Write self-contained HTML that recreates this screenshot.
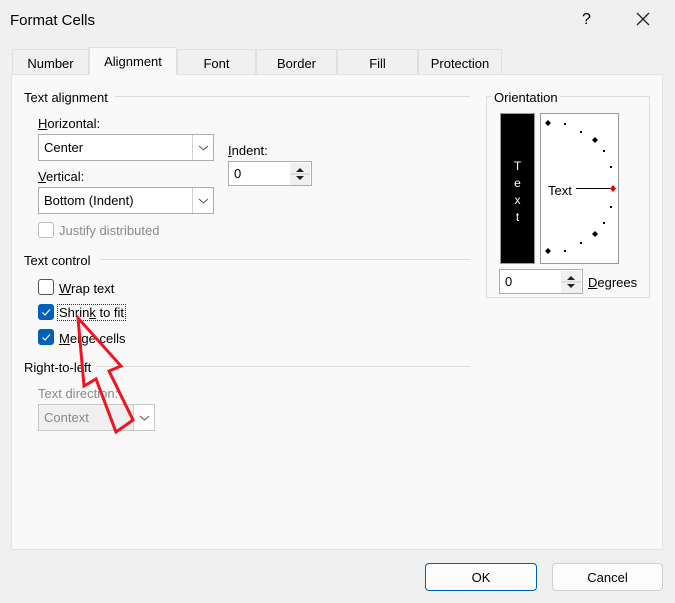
<!DOCTYPE html><html><head><style>
*{margin:0;padding:0;box-sizing:border-box}
body{width:675px;height:603px;background:#f0f0f0;font-family:"Liberation Sans",sans-serif;font-size:13px;color:#000;position:relative;overflow:hidden}
.a{position:absolute;white-space:nowrap}
.tab{position:absolute;top:49px;height:25px;border:1px solid #e0e0e0;border-bottom:none;background:#f0f0f0;text-align:center;line-height:27px}
.sel{top:47px;height:28px;background:#f9f9f9;z-index:2}
.panel{position:absolute;left:11px;top:74px;width:652px;height:476px;background:#f9f9f9;border:1px solid #e3e3e3}
.line{position:absolute;height:1px;background:#dcdcdc}
.combo{position:absolute;background:#fff;border:1px solid #adadad;height:27px;line-height:26px;padding-left:5px}
.combo .dd{position:absolute;right:0;top:0;width:21px;height:25px;border-left:1px solid #d0d0d0}
.cb{position:absolute;width:16px;height:16px;border:1px solid #555;border-radius:3px;background:#fff}
.cbk{background:#005fb8;border-color:#005fb8}
.spin{position:absolute;background:#fff;border:1px solid #adadad;height:25px;line-height:24px;padding-left:5px}
.btn{position:absolute;height:28px;border:1px solid #d0d0d0;border-radius:4px;background:#fdfdfd;text-align:center;line-height:28px}
u{text-decoration:underline}
</style></head><body>
<div class="a" style="left:10px;top:12px;font-size:15px">Format Cells</div>
<div class="a" style="left:582px;top:11px;font-size:16px">?</div>
<svg class="a" style="left:636px;top:12px" width="14" height="14"><path d="M1 1L13 13M13 1L1 13" stroke="#222" stroke-width="1.3"/></svg>
<div class="panel"></div>
<div class="tab" style="left:12px;width:77px">Number</div>
<div class="tab sel" style="left:89px;width:88px">Alignment</div>
<div class="tab" style="left:177px;width:79px">Font</div>
<div class="tab" style="left:256px;width:81px">Border</div>
<div class="tab" style="left:337px;width:81px">Fill</div>
<div class="tab" style="left:418px;width:84px">Protection</div>

<div class="a" style="left:24px;top:90px">Text alignment</div><div class="line" style="left:115px;top:96px;width:355px"></div>
<div class="a" style="left:38px;top:116px"><u>H</u>orizontal:</div>
<div class="combo" style="left:38px;top:134px;width:176px">Center<div class="dd"><svg width="21" height="25"><path d="M6 11L10.5 15L15 11" stroke="#555" fill="none"/></svg></div></div>
<div class="a" style="left:228px;top:143px"><u>I</u>ndent:</div>
<div class="spin" style="left:228px;top:161px;width:84px">0<svg style="position:absolute;right:1px;top:1px" width="20" height="22"><rect x="0" y="0" width="20" height="22" fill="#f0f0f0"/><path d="M6 9L10 5L14 9Z M6 13L10 17L14 13Z" fill="#222"/><path d="M0 11H20" stroke="#ccc"/></svg></div>
<div class="a" style="left:38px;top:169px"><u>V</u>ertical:</div>
<div class="combo" style="left:38px;top:187px;width:176px">Bottom (Indent)<div class="dd"><svg width="21" height="25"><path d="M6 11L10.5 15L15 11" stroke="#555" fill="none"/></svg></div></div>
<div class="cb" style="left:38px;top:222px;border-color:#bbb"></div><div class="a" style="left:59px;top:223px;color:#8a8a8a">Justify distributed</div>

<div class="a" style="left:24px;top:253px">Text control</div><div class="line" style="left:100px;top:259px;width:370px"></div>
<div class="cb" style="left:38px;top:279px"></div><div class="a" style="left:59px;top:281px"><u>W</u>rap text</div>
<div class="cb cbk" style="left:38px;top:304px"><svg width="14" height="14"><path d="M3.5 7.5L6 10L11 4.5" stroke="#fff" fill="none" stroke-width="1.2"/></svg></div><div class="a" style="left:58px;top:305px;outline:1px dotted #333;padding:0 1px">Shrin<u>k</u> to fit</div>
<div class="cb cbk" style="left:38px;top:329px"><svg width="14" height="14"><path d="M3.5 7.5L6 10L11 4.5" stroke="#fff" fill="none" stroke-width="1.2"/></svg></div><div class="a" style="left:59px;top:331px"><u>M</u>erge cells</div>

<div class="a" style="left:24px;top:360px">Right-to-left</div><div class="line" style="left:96px;top:366px;width:374px"></div>
<div class="a" style="left:38px;top:386px;color:#8a8a8a">Text direction:</div>
<div class="combo" style="left:38px;top:404px;width:117px;background:#f0f0f0;border-color:#c8c8c8;color:#8a8a8a">Context<div class="dd" style="background:#fff"><svg width="21" height="25"><path d="M6 11L10.5 15L15 11" stroke="#555" fill="none"/></svg></div></div>

<div class="a" style="left:486px;top:96px;width:164px;height:202px;border:1px solid #dcdcdc"></div>
<div class="a" style="left:492px;top:90px;background:#f9f9f9;padding:0 2px">Orientation</div>
<div class="a" style="left:500px;top:113px;width:35px;height:151px;background:#000;border:1px solid #999;color:#fff;text-align:center;line-height:17px;padding-top:44px;font-size:12px">T<br>e<br>x<br>t</div>
<svg class="a" style="left:540px;top:113px" width="80" height="151"><rect x="0.5" y="0.5" width="78" height="150" fill="#fff" stroke="#999"/>
<g fill="#000"><path d="M8 7l3 3-3 3-3-3z M55 24l3 3-3 3-3-3z M55 118l3 3-3 3-3-3z M8 135l3 3-3 3-3-3z"/>
<rect x="24" y="10" width="2" height="2"/><rect x="40" y="18" width="2" height="2"/><rect x="63" y="37" width="2" height="2"/><rect x="70" y="53" width="2" height="2"/><rect x="70" y="93" width="2" height="2"/><rect x="63" y="109" width="2" height="2"/><rect x="40" y="129" width="2" height="2"/><rect x="24" y="137" width="2" height="2"/></g>
<path d="M36 75.5H70" stroke="#000"/><path d="M73 72l3 3.5-3 3.5-3-3.5z" fill="#e00"/>
<text x="8" y="82" font-family="Liberation Sans" font-size="13">Text</text></svg>
<div class="spin" style="left:499px;top:269px;width:84px">0<svg style="position:absolute;right:1px;top:1px" width="20" height="22"><rect x="0" y="0" width="20" height="22" fill="#f0f0f0"/><path d="M6 9L10 5L14 9Z M6 13L10 17L14 13Z" fill="#222"/><path d="M0 11H20" stroke="#ccc"/></svg></div>
<div class="a" style="left:588px;top:275px"><u>D</u>egrees</div>

<svg class="a" style="left:0;top:0" width="675" height="603"><path d="M78 318L121 366L109 371L133 420L116 432L96 379L84 386Z" fill="none" stroke="#f0141e" stroke-width="3" stroke-linejoin="miter"/></svg>

<div class="btn" style="left:425px;top:563px;width:112px;border-color:#005fb8">OK</div>
<div class="btn" style="left:552px;top:563px;width:111px">Cancel</div>
</body></html>
